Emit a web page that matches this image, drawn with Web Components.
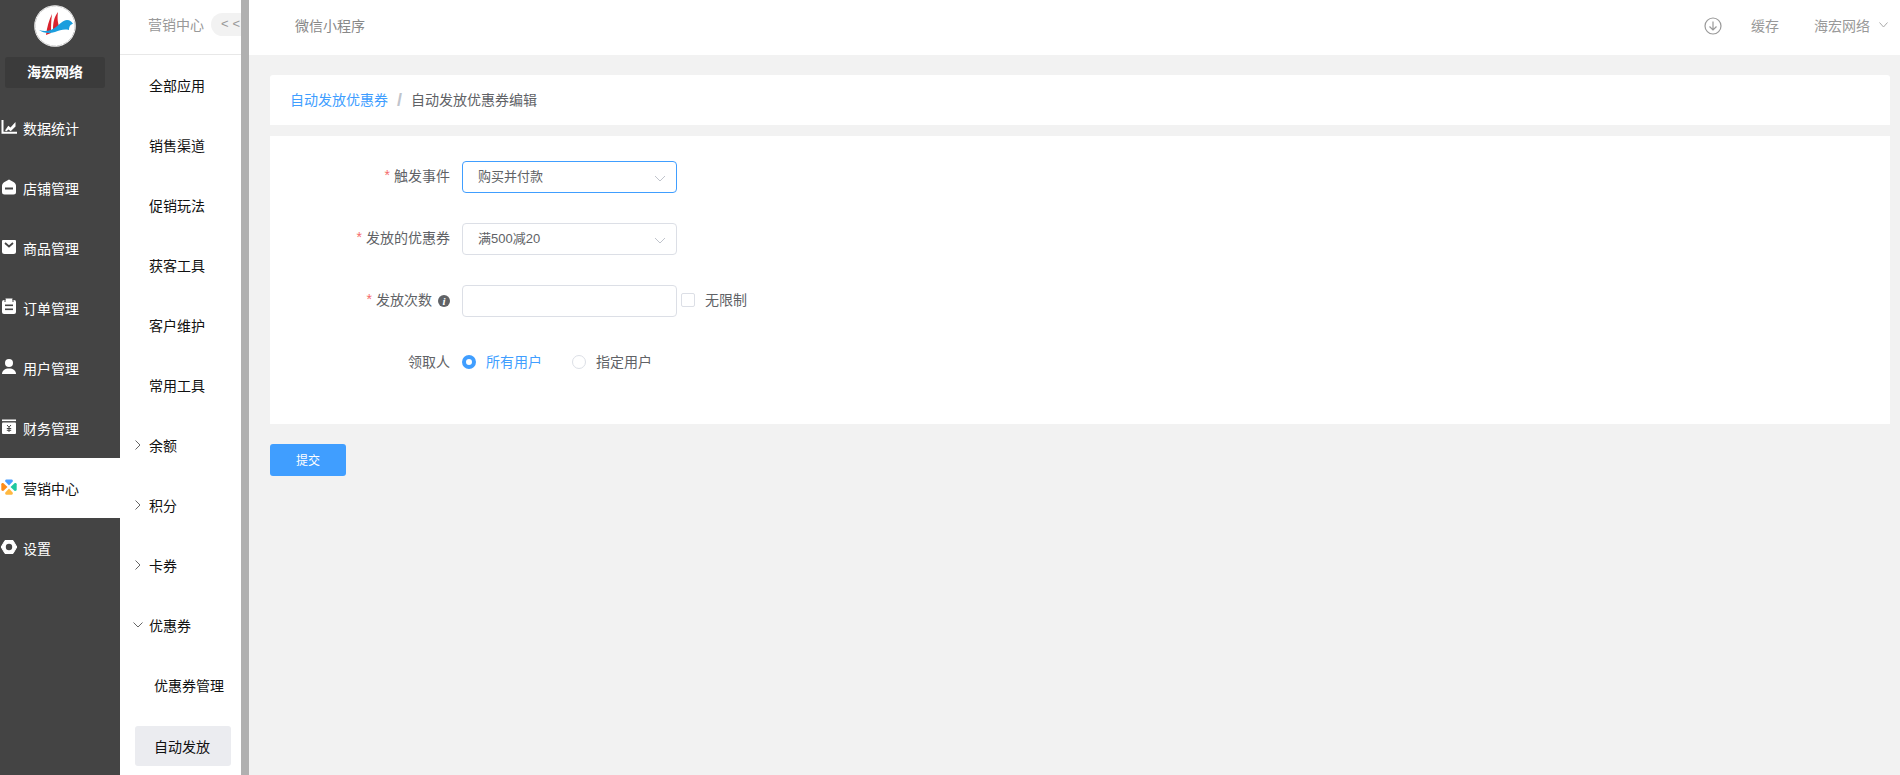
<!DOCTYPE html>
<html>
<head>
<meta charset="utf-8">
<title>自动发放优惠券</title>
<style>
  html, body { margin: 0; height: 100%; overflow: hidden; }
  body { font-family: "Liberation Sans", "Noto Sans CJK SC", sans-serif; font-size: 14px; }
</style>
</head>
<body>
<app-shell>
  <main-nav slot="nav"></main-nav>
  <sub-nav slot="sub"></sub-nav>
  <top-bar slot="top"></top-bar>
  <bread-crumb slot="content"></bread-crumb>
  <coupon-form slot="content"></coupon-form>
  <submit-button slot="content">提交</submit-button>
</app-shell>

<script>
// --- Layout ---
class AppShell extends HTMLElement {
    constructor() {
        super();
        this.attachShadow({ mode: 'open' });
        this.shadowRoot.innerHTML = `
            <style>
                :host { display: flex; width: 1900px; height: 775px; overflow: hidden; background: #f2f2f2; }
                .sub { flex: none; width: 121px; height: 775px; overflow: hidden; background: #fff; }
                .bar { flex: none; width: 8px; background: #b0b0b0; }
                .main { flex: 1; min-width: 0; display: flex; flex-direction: column; }
                .content { padding: 20px 10px 0 21px; display: flex; flex-direction: column; }
            </style>
            <slot name="nav"></slot>
            <div class="sub"><slot name="sub"></slot></div>
            <div class="bar"></div>
            <div class="main">
                <slot name="top"></slot>
                <div class="content"><slot name="content"></slot></div>
            </div>
        `;
    }
}
customElements.define('app-shell', AppShell);

// --- Dark main menu ---
const MAIN_ICONS = {
    chart: '<path d="M2.500 2v12.700H17" fill="none" stroke="#fff" stroke-width="2"/><path d="M5 12.500l3.300-4.800 2.200 1.800L15.500 4v4.500l-4.800 4.700-2.200-1.800-2 1.800z" fill="#fff"/>',
    shop: '<path d="M2 8c0-2 1-3 2.500-4L9 1.500 13.500 4C15 5 16 6 16 8v6a2.500 2.500 0 0 1-2.500 2.500h-9A2.500 2.500 0 0 1 2 14z" fill="#fff"/><rect x="5" y="9.500" width="8" height="2" fill="#444"/>',
    goods: '<path d="M3 2h12a1 1 0 0 1 1 1v10.500a2.500 2.500 0 0 1-2.500 2.500h-9A2.500 2.500 0 0 1 2 13.500V3a1 1 0 0 1 1-1z" fill="#fff"/><path d="M5 5l4 3.500L13 5" fill="none" stroke="#444" stroke-width="1.800"/>',
    order: '<path d="M4 2h10a2 2 0 0 1 2 2v10a2 2 0 0 1-2 2H4a2 2 0 0 1-2-2V4a2 2 0 0 1 2-2z" fill="#fff"/><rect x="5.500" y="0.500" width="7" height="2.500" fill="#fff"/><rect x="4.500" y="1" width="1" height="3" fill="#444"/><rect x="12.500" y="1" width="1" height="3" fill="#444"/><rect x="5" y="6.500" width="8" height="1.600" fill="#444"/><rect x="5" y="10.500" width="8" height="1.600" fill="#444"/>',
    user: '<circle cx="9" cy="5" r="4" fill="#fff"/><path d="M2 16c0-3.500 3-5.500 7-5.500s7 2 7 5.500z" fill="#fff"/>',
    money: '<rect x="2" y="1.500" width="14" height="1.600" fill="#fff"/><rect x="2" y="4.500" width="14" height="11.500" rx="1" fill="#fff"/><path d="M7 7l2 2.200L11 7M9 9.200V14M6.800 10.500h4.400M6.800 12.300h4.400" fill="none" stroke="#444" stroke-width="1"/>',
    market: '<path d="M9 7.500L5.300 3.500C4.800 2.800 5.300 1.500 6.300 1.500h5.400c1 0 1.500 1.300 1 2z" fill="#4a9eff"/><path d="M10.500 9l4-3.700c.7-.5 2.200 0 2.200 1v5.400c0 1-1.500 1.500-2.200 1z" fill="#1fc8a0"/><path d="M9 10.500l3.700 4c.5.700 0 2.200-1 2.200H6.300c-1 0-1.500-1.500-1-2.200z" fill="#ffb840"/><path d="M7.500 9l-4 3.700c-.7.500-2.200 0-2.200-1V6.300c0-1 1.500-1.500 2.200-1z" fill="#ff8c1a"/>',
    gear: '<path d="M5 2.500h8L16.800 9 13 15.500H5L1.200 9z" fill="#fff" stroke="#fff" stroke-width="1" stroke-linejoin="round"/><circle cx="9" cy="9" r="3.200" fill="#444"/>'
};

class MainNav extends HTMLElement {
    constructor() {
        super();
        this.attachShadow({ mode: 'open' });
        const items = [
            ['chart', '数据统计'], ['shop', '店铺管理'], ['goods', '商品管理'], ['order', '订单管理'],
            ['user', '用户管理'], ['money', '财务管理'], ['market', '营销中心', true], ['gear', '设置']
        ];
        this.shadowRoot.innerHTML = `
            <style>
                :host { display: block; flex: none; width: 120px; height: 775px; background: #444; color: #fff; }
                .logo { height: 57px; display: flex; justify-content: center; align-items: flex-start; padding-right: 10px; }
                .logo svg { margin-top: 5px; }
                .name { margin: 0 15px 0 5px; height: 31px; line-height: 30px; text-align: center; background: #3b3b3b; border-radius: 3px; font-weight: bold; font-size: 14px; }
                .list { margin-top: 10px; }
                .item { height: 60px; display: flex; align-items: center; gap: 5px; }
                .item svg { flex: none; margin-top: -2px; }
                .item.on { background: #fff; color: #111; }
            </style>
            <div class="logo">
                <svg width="42" height="42" viewBox="0 0 42 42">
                    <circle cx="21" cy="21" r="20.800" fill="#fff"/>
                    <circle cx="21" cy="21" r="20" fill="none" stroke="#bbb" stroke-width="0.800" stroke-dasharray="5 1"/>
                    <path d="M12 30C13 22 15 15 18 9c-1 7-1 14-1 19z" fill="#d9232e"/>
                    <path d="M19 25c0-7 1-13 5-18-1 7 0 11 1 14z" fill="#d9232e"/>
                    <path d="M5 25c6 2 12 1 17-3 4-3 7-7 11-7 3 0 5 2 6 4-2 0-4 2-4 6-5-1-9 0-14 2-6 2-12 1-16-2z" fill="#1b9ede"/>
                </svg>
            </div>
            <div class="name">海宏网络</div>
            <div class="list">
                ${items.map(([icon, text, on]) => `<div class="item${on ? ' on' : ''}"><svg width="18" height="18" viewBox="0 0 18 18">${MAIN_ICONS[icon]}</svg><span>${text}</span></div>`).join('')}
            </div>
        `;
    }
}
customElements.define('main-nav', MainNav);

// --- Second level menu ---
class SubNav extends HTMLElement {
    constructor() {
        super();
        this.attachShadow({ mode: 'open' });
        const rows = [
            ['全部应用'], ['销售渠道'], ['促销玩法'], ['获客工具'], ['客户维护'], ['常用工具'],
            ['余额', 'r'], ['积分', 'r'], ['卡券', 'r'], ['优惠券', 'd'], ['优惠券管理', 's'], ['自动发放', 'a']
        ];
        const arrow = k => k === 'r'
            ? '<svg class="arrow" width="10" height="10" viewBox="0 0 10 10"><path d="M2.500 .5L7 5 2.500 9.500" fill="none" stroke="#666" stroke-width="1"/></svg>'
            : k === 'd' ? '<svg class="arrow" width="10" height="10" viewBox="0 0 10 10"><path d="M.5 2.500L5 7l4.500-4.500" fill="none" stroke="#666" stroke-width="1"/></svg>' : '';
        this.shadowRoot.innerHTML = `
            <style>
                :host { display: block; width: 121px; color: #111; }
                .head { height: 48px; padding: 0 0 6px 28px; border-bottom: 1px solid #e8e8e8; display: flex; align-items: center; color: #999; white-space: nowrap; }
                .pill { flex: none; margin-left: 7px; width: 40px; height: 23px; line-height: 21px; background: #f2f2f2; border-radius: 12px 0 0 12px; padding-left: 10px; box-sizing: border-box; color: #999; letter-spacing: 4px; font-size: 13px; }
                .row { position: relative; height: 60px; display: flex; align-items: center; padding-left: 29px; }
                .row.s { padding-left: 34px; }
                .row.a { height: 40px; margin: 11px 10px 0 15px; padding-left: 19px; background: #ebecf0; border-radius: 3px; }
                .arrow { position: absolute; left: 13px; top: 25px; }
            </style>
            <div class="head">营销中心<span class="pill">&lt;&lt;</span></div>
            <div class="rows">
                ${rows.map(([t, k]) => `<div class="row ${k || ''}">${arrow(k)}${t}</div>`).join('')}
            </div>
        `;
    }
}
customElements.define('sub-nav', SubNav);

// --- Top bar ---
class TopBar extends HTMLElement {
    constructor() {
        super();
        this.attachShadow({ mode: 'open' });
        this.shadowRoot.innerHTML = `
            <style>
                :host { display: flex; align-items: center; height: 55px; background: #fff; color: #999; padding: 0 12px 6px 46px; box-sizing: border-box; }
                .title { flex: 1; color: #888; }
                .dl { margin: 2px 29px 0 0; }
                .cache { margin-right: 35px; }
                .chev { margin-left: 9px; }
            </style>
            <span class="title">微信小程序</span>
            <svg class="dl" width="18" height="18" viewBox="0 0 18 18"><circle cx="9" cy="9" r="8" fill="none" stroke="#999" stroke-width="1.200"/><path d="M9 4.500v8.500M5.500 9.500L9 13l3.500-3.500" fill="none" stroke="#999" stroke-width="1.200"/></svg>
            <span class="cache">缓存</span>
            <span>海宏网络</span>
            <svg class="chev" width="9" height="6" viewBox="0 0 9 6"><path d="M.5 .5L4.500 5l4-4.500" fill="none" stroke="#aaa" stroke-width="1"/></svg>
        `;
    }
}
customElements.define('top-bar', TopBar);

// --- Breadcrumb ---
class BreadCrumb extends HTMLElement {
    constructor() {
        super();
        this.attachShadow({ mode: 'open' });
        this.shadowRoot.innerHTML = `
            <style>
                :host { display: flex; align-items: center; height: 50px; box-sizing: border-box; padding: 0 0 2px 20px; background: #fff; border-radius: 3px 3px 0 0; color: #606266; }
                a { color: #409eff; }
                i { font-style: normal; font-weight: bold; font-size: 18px; line-height: 18px; color: #c0c4cc; margin: 2px 9px 0; }
            </style>
            <a>自动发放优惠券</a><i>/</i><span>自动发放优惠券编辑</span>
        `;
    }
}
customElements.define('bread-crumb', BreadCrumb);

// --- Form bits ---
class FormRow extends HTMLElement {
    constructor() {
        super();
        this.attachShadow({ mode: 'open' });
        this.shadowRoot.innerHTML = `
            <style>
                :host { display: flex; align-items: center; height: 32px; color: #606266; }
                .label { flex: none; width: 180px; height: 28px; padding-bottom: 4px; margin-right: 12px; display: flex; justify-content: flex-end; align-items: center; white-space: nowrap; }
                .star { color: #f56c6c; margin-right: 4px; display: none; }
                :host([required]) .star { display: inline; }
                .body { display: flex; align-items: center; }
            </style>
            <div class="label"><span class="star">*</span><slot name="label"></slot></div>
            <div class="body"><slot></slot></div>
        `;
    }
}
customElements.define('form-row', FormRow);

class SelectBox extends HTMLElement {
    constructor() {
        super();
        this.attachShadow({ mode: 'open' });
        this.shadowRoot.innerHTML = `
            <style>
                :host { display: flex; align-items: center; width: 215px; height: 32px; box-sizing: border-box; border: 1px solid #dcdfe6; border-radius: 4px; background: #fff; padding: 0 10px 3px 15px; color: #606266; font-size: 13px; }
                :host([focus]) { border-color: #409eff; }
                span { flex: 1; min-height: 1em; }
                svg { display: none; margin-top: 5px; }
                :host([arrow]) svg { display: block; }
            </style>
            <span><slot></slot></span>
            <svg width="12" height="7" viewBox="0 0 12 7"><path d="M1 1l5 5 5-5" fill="none" stroke="#c0c4cc" stroke-width="1"/></svg>
        `;
    }
}
customElements.define('select-box', SelectBox);

class CouponForm extends HTMLElement {
    constructor() {
        super();
        this.attachShadow({ mode: 'open' });
        this.shadowRoot.innerHTML = `
            <style>
                :host { display: flex; flex-direction: column; gap: 30px; height: 288px; box-sizing: border-box; margin-top: 11px; padding-top: 25px; background: #fff; }
                .info { display: inline-block; width: 12px; height: 12px; line-height: 12px; margin-left: 6px; border-radius: 50%; background: #606266; color: #fff; font: italic bold 11px "Liberation Serif", serif; text-align: center; vertical-align: 0; }
                .check { flex: none; width: 14px; height: 14px; box-sizing: border-box; margin: 0 10px 2px 4px; border: 1px solid #dcdfe6; border-radius: 2px; background: #fff; }
                .radio { flex: none; width: 14px; height: 14px; box-sizing: border-box; margin: 0 10px 2px 0; border: 1px solid #dcdfe6; border-radius: 50%; background: #fff; }
                .radio.on { border: 4.500px solid #409eff; }
                .text { margin-bottom: 4px; }
                .blue { color: #409eff; margin-right: 30px; }
            </style>
            <form-row required><span slot="label">触发事件</span><select-box focus arrow>购买并付款</select-box></form-row>
            <form-row required><span slot="label">发放的优惠券</span><select-box arrow>满500减20</select-box></form-row>
            <form-row required><span slot="label">发放次数<span class="info">i</span></span><select-box></select-box><span class="check"></span><span class="text">无限制</span></form-row>
            <form-row><span slot="label">领取人</span><span class="radio on"></span><span class="text blue">所有用户</span><span class="radio"></span><span class="text">指定用户</span></form-row>
        `;
    }
}
customElements.define('coupon-form', CouponForm);

class SubmitButton extends HTMLElement {
    constructor() {
        super();
        this.attachShadow({ mode: 'open' });
        this.shadowRoot.innerHTML = `
            <style>
                :host { display: flex; align-items: center; justify-content: center; width: 76px; height: 32px; box-sizing: border-box; padding-bottom: 2px; margin-top: 20px; background: #409eff; border-radius: 3px; color: #fff; font-size: 12px; }
            </style>
            <slot></slot>
        `;
    }
}
customElements.define('submit-button', SubmitButton);
</script>
</body>
</html>
